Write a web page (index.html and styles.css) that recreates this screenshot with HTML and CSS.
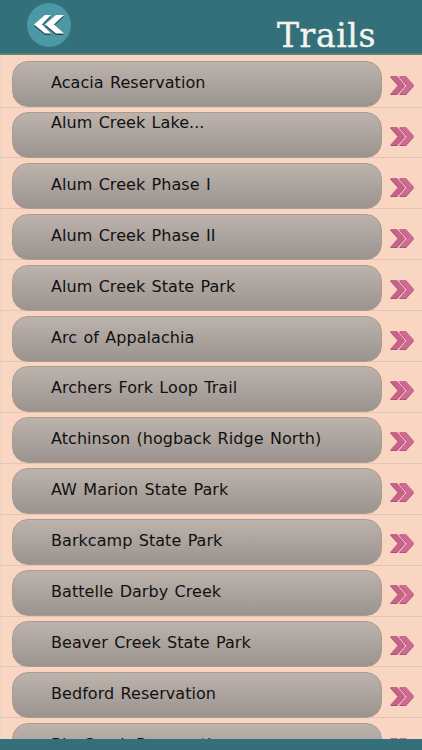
FILE: index.html
```html
<!DOCTYPE html>
<html lang="en">
<head>
<meta charset="utf-8">
<title>Trails</title>
<link rel="stylesheet" href="styles.css">
</head>
<body>
<svg class="defs" width="0" height="0" aria-hidden="true">
  <symbol id="chev" viewBox="0 0 24 19">
    <path fill="#a04a70" d="M0 19 L8 10 L0 1 H7 L15 10 L7 19 Z"/>
    <path fill="#a04a70" d="M9 19 L17 10 L9 1 H16 L24 10 L16 19 Z"/>
    <path fill="#c9628b" d="M0 18.200 L8 9 L0 0 H7 L15 9 L7 18.200 Z"/>
    <path fill="#cf6b93" d="M9 18.200 L17 9 L9 0 H16 L24 9 L16 18.200 Z"/>
  </symbol>
</svg>
<div class="app">
  <header class="topbar">
    <a class="back">
      <svg class="back-icon" viewBox="0 0 30 20" width="30" height="20" aria-hidden="true">
        <path fill="#24474f" d="M0 11 L11 1.500 H17 L8 11 L17 20 H11 Z"/>
        <path fill="#24474f" d="M11 11 L22 1.500 H30 L20 11 L30 20 H22 Z"/>
        <path fill="#fff" d="M0 9.500 L11 0 H17 L8 9.500 L17 18.500 H11 Z"/>
        <path fill="#fff" d="M11 9.500 L22 0 H30 L20 9.500 L30 18.500 H22 Z"/>
      </svg>
    </a>
    <h1 class="title">Trails</h1>
  </header>
  <ul class="list">
    <li class="row"><div class="pill"><span class="label">Acacia Reservation</span></div><svg class="chev"><use href="#chev"/></svg></li>
    <li class="row"><div class="pill pill-top"><span class="label">Alum Creek Lake...</span></div><svg class="chev"><use href="#chev"/></svg></li>
    <li class="row"><div class="pill"><span class="label">Alum Creek Phase I</span></div><svg class="chev"><use href="#chev"/></svg></li>
    <li class="row"><div class="pill"><span class="label">Alum Creek Phase II</span></div><svg class="chev"><use href="#chev"/></svg></li>
    <li class="row"><div class="pill"><span class="label">Alum Creek State Park</span></div><svg class="chev"><use href="#chev"/></svg></li>
    <li class="row"><div class="pill"><span class="label">Arc of Appalachia</span></div><svg class="chev"><use href="#chev"/></svg></li>
    <li class="row"><div class="pill"><span class="label">Archers Fork Loop Trail</span></div><svg class="chev"><use href="#chev"/></svg></li>
    <li class="row"><div class="pill"><span class="label">Atchinson (hogback Ridge North)</span></div><svg class="chev"><use href="#chev"/></svg></li>
    <li class="row"><div class="pill"><span class="label">AW Marion State Park</span></div><svg class="chev"><use href="#chev"/></svg></li>
    <li class="row"><div class="pill"><span class="label">Barkcamp State Park</span></div><svg class="chev"><use href="#chev"/></svg></li>
    <li class="row"><div class="pill"><span class="label">Battelle Darby Creek</span></div><svg class="chev"><use href="#chev"/></svg></li>
    <li class="row"><div class="pill"><span class="label">Beaver Creek State Park</span></div><svg class="chev"><use href="#chev"/></svg></li>
    <li class="row"><div class="pill"><span class="label">Bedford Reservation</span></div><svg class="chev"><use href="#chev"/></svg></li>
    <li class="row"><div class="pill"><span class="label">Big Creek Reservation</span></div><svg class="chev"><use href="#chev"/></svg></li>
  </ul>
  <div class="bottombar"></div>
</div>
</body>
</html>
```
FILE: styles.css
```css
* { box-sizing: border-box; }
html, body { margin: 0; padding: 0; }
body { width: 422px; height: 750px; overflow: hidden; background: #f8d6c2; font-family: "DejaVu Sans", sans-serif; }
.defs { display: block; height: 0; }
.app { display: flex; flex-direction: column; height: 750px; }
.topbar {
  flex: 0 0 55px;
  display: flex; align-items: center; justify-content: space-between;
  padding: 0 46px 0 27px;
  background: #33707a;
  border-bottom: 2px solid #5f7f72;
}
.back {
  width: 44px; height: 44px; border-radius: 50%;
  background: #4c98a5;
  display: flex; align-items: center; justify-content: center;
  margin-top: -3px;
}
.title {
  align-self: flex-end;
  margin: 0; font: 400 33px/34px "DejaVu Serif", serif; color: #f4f4ee;
  letter-spacing: 0.6px;
  -webkit-text-stroke: 0.4px #f4f4ee;
}
.list {
  flex: 1 1 auto; min-height: 0; overflow: hidden;
  list-style: none; margin: 0; padding: 1.6px 0 0;
}
.row {
  height: 50.92px;
  display: flex; align-items: flex-start;
  padding: 4.4px 8px 0 11px;
  border-bottom: 1px solid #e2c6b5;
  border-left: 1px solid #ecd2c1;
}
.pill {
  flex: 0 0 370px; height: 46px;
  border-radius: 16px;
  border: 1px solid #ab9a90;
  background: linear-gradient(#bcb3ad, #9b938e);
  display: flex; align-items: center;
  padding: 0 0 2px 38px;
}
.pill-top { align-items: flex-start; }
.label { font-size: 16px; line-height: 20px; color: #111; white-space: nowrap; word-spacing: 1.2px; letter-spacing: 0.05px; }
.chev { width: 24px; height: 19px; margin: 15px 0 0 8px; flex: none; }
.bottombar { flex: 0 0 11px; background: #33707a; }
```
